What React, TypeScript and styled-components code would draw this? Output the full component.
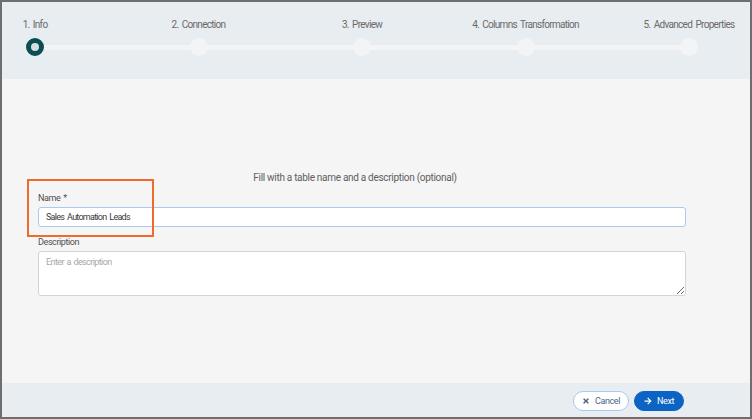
import { Fragment } from 'react';
import styled, { createGlobalStyle } from 'styled-components';
import { FaTimes, FaArrowRight } from 'react-icons/fa';

const GlobalStyle = createGlobalStyle`
  html, body {
    margin: 0;
    padding: 0;
    background: #ffffff;
  }
  * {
    box-sizing: border-box;
  }
  body {
    font-family: Roboto, 'Liberation Sans', sans-serif;
    color: #555555;
  }
`;

const STEPS = [
  '1. Info',
  '2. Connection',
  '3. Preview',
  '4. Columns Transformation',
  '5. Advanced Properties',
];

const Frame = styled.div`
  width: 752px;
  height: 419px;
  border: 2px solid #6e6e6e;
  display: flex;
  flex-direction: column;
  background-color: #f5f5f5;
`;

const Header = styled.header`
  height: 77px;
  flex-shrink: 0;
  background-color: #e8edf1;
  padding: 17px 52px 0 24px;
`;

const Stepper = styled.div`
  display: flex;
  align-items: flex-end;
`;

const Step = styled.div`
  width: 18px;
  display: flex;
  flex-direction: column;
  align-items: center;
  gap: 7px;
`;

const StepLabel = styled.span`
  font-size: 10px;
  line-height: 12px;
  letter-spacing: -0.7px;
  word-spacing: 1.5px;
  white-space: nowrap;
  color: #6a6a6a;
`;

interface DotProps {
  $active: boolean;
}

const StepDot = styled.div<DotProps>`
  width: 18px;
  height: 18px;
  border-radius: 50%;
  background-color: ${(props) => (props.$active ? '#d9dddf' : '#f3f4f6')};
  border: ${(props) => (props.$active ? '5px solid #0c4d54' : 'none')};
  position: relative;
  z-index: 1;
`;

const Track = styled.div`
  flex: 1;
  height: 5px;
  margin: 0 -1px 6px;
  background-color: #f3f4f6;
`;

const Body = styled.main`
  flex: 1;
  display: flex;
  flex-direction: column;
  justify-content: center;
  padding: 18px 64px 2px 36px;
`;

const Intro = styled.p`
  margin: 0 14px 9px 0;
  text-align: center;
  font-size: 10px;
  line-height: 12px;
  letter-spacing: -0.3px;
  color: #5e5e5e;
`;

const Field = styled.div`
  position: relative;
  display: flex;
  flex-direction: column;
  gap: 4px;
  margin-bottom: 10px;
`;

const Label = styled.label`
  font-size: 9px;
  line-height: 10px;
  letter-spacing: -0.4px;
  word-spacing: 1px;
  color: #4f4f4f;
`;

const TextInput = styled.input`
  height: 20px;
  width: 100%;
  border: 1px solid #a9cbef;
  border-radius: 3px;
  background: #ffffff;
  padding: 0 7px;
  font-family: Roboto, 'Liberation Sans', sans-serif;
  font-size: 9px;
  letter-spacing: -0.75px;
  word-spacing: 1.5px;
  color: #3a3a3a;
  outline: none;
`;

const TextArea = styled.textarea`
  height: 45px;
  width: 100%;
  border: 1px solid #d4d4d4;
  border-radius: 3px;
  background: #ffffff;
  padding: 5px 7px;
  font-family: Roboto, 'Liberation Sans', sans-serif;
  font-size: 9px;
  letter-spacing: -0.6px;
  word-spacing: 1px;
  color: #3a3a3a;
  outline: none;

  &::placeholder {
    color: #a8a8a8;
  }
`;

const Highlight = styled.div`
  position: absolute;
  left: -11px;
  top: -14px;
  width: 127px;
  height: 58px;
  border: 2px solid #ef6a2c;
  pointer-events: none;
`;

const Footer = styled.footer`
  height: 34px;
  flex-shrink: 0;
  background-color: #e8edf1;
  display: flex;
  align-items: center;
  justify-content: flex-end;
  gap: 5px;
  padding: 2px 66px 0 0;
`;

interface ButtonProps {
  $primary?: boolean;
}

const Button = styled.button<ButtonProps>`
  height: 20px;
  border-radius: 10px;
  display: flex;
  align-items: center;
  justify-content: center;
  gap: 5px;
  padding: 0;
  width: ${(props) => (props.$primary ? '50px' : '56px')};
  background-color: ${(props) => (props.$primary ? '#0b63c4' : '#ffffff')};
  border: 1px solid ${(props) => (props.$primary ? '#0b63c4' : '#a9cbef')};
  color: ${(props) => (props.$primary ? '#ffffff' : '#4b6587')};
  font-family: Roboto, 'Liberation Sans', sans-serif;
  font-size: 9px;
  letter-spacing: -0.4px;
  cursor: pointer;

  svg {
    width: 8px;
    height: 8px;
  }
`;

const App = () => {
  return (
    <>
      <GlobalStyle />
      <Frame>
        <Header>
          <Stepper>
            {STEPS.map((step, i) => (
              <Fragment key={step}>
                {i > 0 && <Track />}
                <Step>
                  <StepLabel>{step}</StepLabel>
                  <StepDot $active={i === 0} />
                </Step>
              </Fragment>
            ))}
          </Stepper>
        </Header>
        <Body>
          <Intro>Fill with a table name and a description (optional)</Intro>
          <Field>
            <Highlight />
            <Label>Name *</Label>
            <TextInput defaultValue="Sales Automation Leads" />
          </Field>
          <Field>
            <Label>Description</Label>
            <TextArea placeholder="Enter a description" />
          </Field>
        </Body>
        <Footer>
          <Button>
            <FaTimes />
            Cancel
          </Button>
          <Button $primary>
            <FaArrowRight />
            Next
          </Button>
        </Footer>
      </Frame>
    </>
  );
};

export default App;
